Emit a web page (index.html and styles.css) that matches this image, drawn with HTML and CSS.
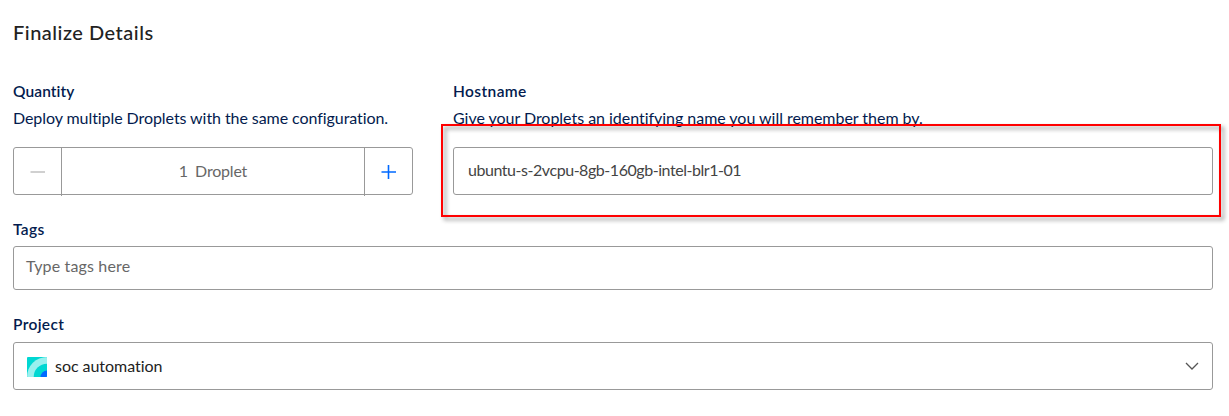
FILE: index.html
```html
<!DOCTYPE html>
<html lang="en">
<head>
<meta charset="utf-8">
<title>Finalize Details</title>
<link rel="stylesheet" href="styles.css">
</head>
<body>
<main class="details">
  <h1 class="title">Finalize Details</h1>
  <div class="columns">
    <section class="quantity">
      <h2 class="label">Quantity</h2>
      <p class="hint hint-quantity">Deploy multiple Droplets with the same configuration.</p>
      <div class="stepper">
        <button class="step" aria-label="Decrease">
          <svg width="16" height="16" viewBox="0 0 16 16"><path d="M.5 8H15" stroke="#d0d0d0" stroke-width="2"/></svg>
        </button>
        <div class="count"><span>1</span><span class="unit">Droplet</span></div>
        <button class="step" aria-label="Increase">
          <svg width="16" height="16" viewBox="0 0 16 16"><path d="M.5 8H15M7.5 1V15" stroke="#0069ff" stroke-width="1.6"/></svg>
        </button>
      </div>
    </section>
    <section class="hostname">
      <h2 class="label label-host">Hostname</h2>
      <p class="hint hint-host">Give your Droplets an identifying name you will remember them by.</p>
      <div class="field host-field">ubuntu-s-2vcpu-8gb-160gb-intel-blr1-01</div>
      <div class="highlight"></div>
    </section>
  </div>
  <section class="tags">
    <h2 class="label label-tags">Tags</h2>
    <div class="field tags-field">Type tags here</div>
  </section>
  <section class="project">
    <h2 class="label label-project">Project</h2>
    <div class="field project-field">
      <svg class="logo" width="20" height="20" viewBox="0 0 20 20">
        <defs><clipPath id="tile"><rect width="20" height="20" rx="1"/></clipPath></defs>
        <g clip-path="url(#tile)">
          <rect width="20" height="20" fill="#00d7d2"/>
          <circle cx="20" cy="20" r="20" fill="#99f0ee"/>
          <circle cx="20" cy="20" r="13.3" fill="#00d7d2"/>
          <circle cx="20" cy="20" r="6.5" fill="#0069ff"/>
        </g>
      </svg>
      <span class="project-name">soc automation</span>
      <svg class="chevron" width="14" height="8" viewBox="0 0 14 8"><path d="M1 1L7 7L13 1" fill="none" stroke="#555" stroke-width="1.3"/></svg>
    </div>
  </section>
</main>
</body>
</html>
```
FILE: styles.css
```css
* { box-sizing: border-box; }
body {
  margin: 0;
  background: #fff;
  color: #031b4e;
  font: 16px/24px Lato, "Liberation Sans", sans-serif;
  white-space: nowrap;
}
.details { padding: 20px 16px 0 13px; }
.title { margin: 0 0 35px; font-size: 20px; line-height: 24px; font-weight: 500; letter-spacing: .5px; color: #222; }
.columns { display: grid; grid-template-columns: 400px 1fr; column-gap: 40px; }
.hostname { position: relative; }
.label { margin: 0; font-size: 15.5px; line-height: 24px; font-weight: 600; letter-spacing: .1px; }
.label-host { letter-spacing: .4px; }
.label-tags, .label-project { letter-spacing: .35px; }
.hint { margin: 3px 0 17px; line-height: 24px; }
.hint-quantity { letter-spacing: -.07px; }
.hint-host { letter-spacing: -.03px; }
.stepper { display: flex; height: 48px; border: 1px solid #999; border-radius: 3px; }
.step { display: flex; align-items: center; justify-content: center; width: 47px; height: 48px; padding: 0; border: 0; background: none; }
.count {
  display: flex;
  flex: 1;
  align-items: center;
  justify-content: center;
  gap: 7px;
  height: 48px;
  padding-bottom: 2px;
  border: solid #999;
  border-width: 0 1px;
  color: #676767;
}
.unit { letter-spacing: -.2px; }
.field { display: flex; align-items: center; border: 1px solid #999; border-radius: 3px; }
.host-field { height: 48px; padding: 0 14px 2px; letter-spacing: -.45px; color: #444; }
.highlight {
  position: absolute;
  inset: 45px -8px -22px -12px;
  border: 2px solid #f00;
  filter: drop-shadow(3px 3px 2px rgba(0, 0, 0, .45));
  pointer-events: none;
}
.tags { margin-top: 22px; }
.tags-field { height: 44px; margin-top: 5px; padding: 0 12px 4px; letter-spacing: .15px; color: #676767; }
.project { margin-top: 22px; }
.project-field { height: 48px; margin-top: 6px; padding: 0 13px; color: #222; }
.logo { margin-top: 1px; }
.project-name { margin: 0 auto 0 8px; letter-spacing: -.04px; }
```
